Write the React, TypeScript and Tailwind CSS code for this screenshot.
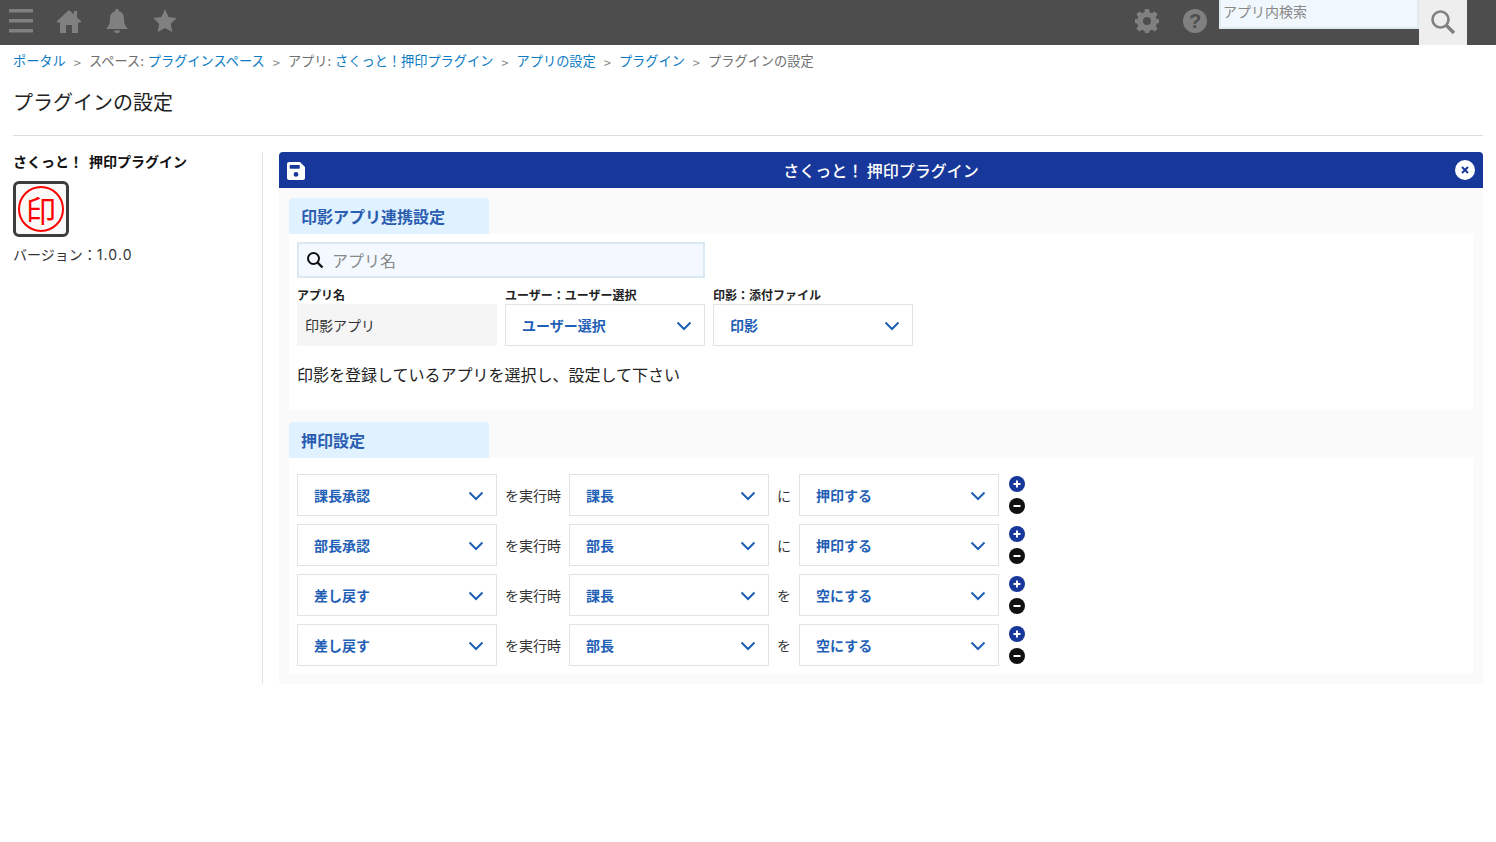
import React from "react";

const font = { fontFamily: '"Noto Sans CJK JP", "Noto Sans", sans-serif' };

function Chevron() {
  return (
    <svg width="16" height="10" viewBox="0 0 16 10" fill="none" className="shrink-0 mt-[2px]">
      <path d="M1.5 1.5 L8 8 L14.5 1.5" stroke="#1f5fb5" strokeWidth="2" />
    </svg>
  );
}

function Select({ label }: { label: string }) {
  return (
    <div className="w-[200px] h-[42px] shrink-0 border border-[#e3e3e3] bg-white flex items-center justify-between pl-4 pr-[12px]">
      <span className="text-[14px] font-bold text-[#1f5fb5]">{label}</span>
      <Chevron />
    </div>
  );
}

function PlusMinus() {
  return (
    <div className="ml-[10px] flex flex-col gap-[6px]">
      <div className="w-4 h-4 rounded-full bg-[#17379a] flex items-center justify-center">
        <svg width="8" height="8" viewBox="0 0 8 8"><path d="M4 0.5V7.5M0.5 4H7.5" stroke="#fff" strokeWidth="2" /></svg>
      </div>
      <div className="w-4 h-4 rounded-full bg-[#111] flex items-center justify-center">
        <svg width="8" height="8" viewBox="0 0 8 8"><path d="M0.5 4H7.5" stroke="#fff" strokeWidth="2" /></svg>
      </div>
    </div>
  );
}

function Row({ a, b, c, d }: { a: string; b: string; c: string; d: string }) {
  return (
    <div className="flex items-center">
      <Select label={a} />
      <span className="w-[72px] text-center text-[14px] text-[#333]">を実行時</span>
      <Select label={b} />
      <span className="w-[30px] text-center text-[14px] text-[#333]">{c}</span>
      <Select label={d} />
      <PlusMinus />
    </div>
  );
}

function Tab({ children }: { children: React.ReactNode }) {
  return (
    <div className="w-[200px] h-9 rounded-t-[4px] bg-[#e0f2ff] pl-3 flex items-center text-[16px] font-bold text-[#2a5db0]">
      {children}
    </div>
  );
}

function Sep() {
  return <span className="mx-[8px] text-[13px] text-[#888] relative top-[2px]">&gt;</span>;
}

function Link({ children }: { children: React.ReactNode }) {
  return <span className="text-[#0c7bc4]">{children}</span>;
}

export default function App() {
  return (
    <div className="min-h-[842px] bg-white text-[#222]" style={font}>
      <header className="h-[45px] bg-[#4d4d4d] flex items-start justify-between">
        <div className="flex items-center h-[42px] pl-[9px] gap-[24px]">
          <svg width="24" height="24" viewBox="0 0 24 24" fill="#808080">
            <rect x="0" y="0" width="24" height="3.5" />
            <rect x="0" y="10" width="24" height="3.5" />
            <rect x="0" y="20" width="24" height="3.5" />
          </svg>
          <svg width="24" height="24" viewBox="0 0 24 24" fill="#808080">
            <path d="M12 1 L17 5.5 V2 H20 V8.4 L24 12 V13.5 H21 V24 H15 V16 H9 V24 H3 V13.5 H0 V12 Z" />
          </svg>
          <svg width="24" height="24" viewBox="0 0 24 24" fill="#808080">
            <path d="M12 0 a2 2 0 0 1 2 2.2 C18 3.2 19 6.5 19 10 C19 15 20.5 17 23 20 H1 C3.5 17 5 15 5 10 C5 6.5 6 3.2 10 2.2 A2 2 0 0 1 12 0 Z" />
            <path d="M9 21.5 H15 A3 2.5 0 0 1 9 21.5 Z" />
          </svg>
          <svg width="24" height="24" viewBox="0 0 24 24" fill="#808080">
            <path d="M12 0.5 L15.6 8 L23.8 9.1 L17.8 14.8 L19.3 23 L12 19 L4.7 23 L6.2 14.8 L0.2 9.1 L8.4 8 Z" />
          </svg>
        </div>
        <div className="flex items-start">
          <svg width="24" height="24" viewBox="0 0 24 24" fill="#808080" className="mt-[9px] mr-[24px]">
            <path fillRule="evenodd" d="M10 0 H14 L14.7 3.3 L16.9 4.2 L19.8 2.4 L22.6 5.2 L20.8 8.1 L21.7 10.3 L24 10 V14 L21.7 14.7 L20.8 16.9 L22.6 19.8 L19.8 22.6 L16.9 20.8 L14.7 21.7 L14 24 H10 L9.3 21.7 L7.1 20.8 L4.2 22.6 L1.4 19.8 L3.2 16.9 L2.3 14.7 L0 14 V10 L2.3 10.3 L3.2 8.1 L1.4 5.2 L4.2 2.4 L7.1 4.2 L9.3 3.3 Z M12 8 A4 4 0 1 0 12 16 A4 4 0 1 0 12 8 Z" />
          </svg>
          <div className="w-6 h-6 mt-[9px] mr-[12px] rounded-full bg-[#808080] flex items-center justify-center text-[20px] leading-none font-bold text-[#4d4d4d]" style={{ fontFamily: '"Liberation Sans", sans-serif' }}>
            ?
          </div>
          <div className="w-[200px] h-[29px] bg-[#f0f8fe] border-b-2 border-x-2 border-[#dfe9f0] pl-[2px] text-[14px] leading-[23px] text-[#888]">
            アプリ内検索
          </div>
          <div className="w-[48px] h-[45px] bg-[#eeeeee] flex justify-center pt-[9px]">
            <svg width="26" height="26" viewBox="0 0 26 26" fill="none" stroke="#808080">
              <circle cx="10.5" cy="10.5" r="8" strokeWidth="2.6" />
              <path d="M16.5 16.5 L24 24" strokeWidth="3.4" />
            </svg>
          </div>
          <div className="w-[29px]" />
        </div>
      </header>

      <div className="px-[13px]">
        <nav className="h-[32px] pb-[1px] flex items-center text-[13.2px] text-[#707070] whitespace-nowrap">
          <Link>ポータル</Link>
          <Sep />
          <span className="mr-[4px]">スペース:</span><Link>プラグインスペース</Link>
          <Sep />
          <span className="mr-[4px]">アプリ:</span><Link>さくっと！押印プラグイン</Link>
          <Sep />
          <Link>アプリの設定</Link>
          <Sep />
          <Link>プラグイン</Link>
          <Sep />
          <span>プラグインの設定</span>
        </nav>
        <h1 className="h-[59px] pt-[11px] text-[20px] leading-[28px] font-normal text-[#222] border-b border-[#dddddd]">
          プラグインの設定
        </h1>

        <div className="flex mt-4">
          <aside className="w-[250px] shrink-0 border-r border-[#e3e3e3] min-h-[532px]">
            <div className="text-[14px] font-bold leading-[18px] text-[#111] whitespace-pre">さくっと！<span className="ml-[6px]">押印プラグイン</span></div>
            <div className="mt-[11px] w-[56px] h-[56px] rounded-[6px] border-[3px] border-[#3d3d3d] bg-[#fafafa] flex items-center justify-center">
              <div className="w-[46px] h-[46px] rounded-full border-2 border-[#ff0000] flex items-center justify-center text-[30px] leading-none text-[#ff0000]">
                印
              </div>
            </div>
            <div className="mt-[7px] text-[14px] leading-[20px] text-[#333]">
              バージョン：<span className="tracking-[1.1px]" style={{ fontFamily: 'Inter, sans-serif' }}>1.0.0</span>
            </div>
          </aside>

          <main className="ml-4 flex-1">
            <div className="relative h-9 rounded-t-[4px] bg-[#17379a] flex items-center justify-center text-[16px] text-white font-medium whitespace-pre">
              <svg width="18" height="18" viewBox="0 0 18 18" className="absolute left-[8px] top-[10px]">
                <path fillRule="evenodd" fill="#fff" d="M2 0 H13 L18 5 V16 A2 2 0 0 1 16 18 H2 A2 2 0 0 1 0 16 V2 A2 2 0 0 1 2 0 Z M3.5 3 A.8 .8 0 0 0 2.7 3.8 V6 A.8 .8 0 0 0 3.5 6.8 H12 A.8 .8 0 0 0 12.8 6 V3.8 A.8 .8 0 0 0 12 3 Z M9 10 A2.4 2.4 0 1 0 9 14.8 A2.4 2.4 0 1 0 9 10 Z" />
              </svg>
              さくっと！ 押印プラグイン
              <div className="absolute right-2 top-[8px] w-5 h-5 rounded-full bg-white flex items-center justify-center">
                <svg width="8" height="8" viewBox="0 0 8 8"><path d="M1 1 L7 7 M7 1 L1 7" stroke="#17379a" strokeWidth="2" /></svg>
              </div>
            </div>

            <div className="bg-[#fafafa] px-[10px] pt-[10px] pb-[10px]">
              <Tab>印影アプリ連携設定</Tab>
              <section className="bg-white h-[176px] px-2 pt-2">
                <div className="w-[408px] h-9 bg-[#f3f9ff] border-2 border-[#dbe9f3] flex items-center pl-[7px]">
                  <svg width="18" height="18" viewBox="0 0 18 18" fill="none" stroke="#111">
                    <circle cx="7.5" cy="7.5" r="5.5" strokeWidth="2" />
                    <path d="M11.5 11.5 L16.5 16.5" strokeWidth="2.4" />
                  </svg>
                  <span className="ml-[8px] text-[16px] text-[#888]">アプリ名</span>
                </div>
                <div className="flex gap-2 mt-[10px]">
                  <div className="w-[200px]">
                    <div className="h-4 text-[12px] leading-[14px] font-bold text-[#222]">アプリ名</div>
                    <div className="h-[42px] bg-[#f5f5f5] pl-2 flex items-center text-[14px] text-[#333]">印影アプリ</div>
                  </div>
                  <div className="w-[200px]">
                    <div className="h-4 text-[12px] leading-[14px] font-bold text-[#222] whitespace-nowrap">ユーザー：ユーザー選択</div>
                    <Select label="ユーザー選択" />
                  </div>
                  <div className="w-[200px]">
                    <div className="h-4 text-[12px] leading-[14px] font-bold text-[#222] whitespace-nowrap">印影：添付ファイル</div>
                    <Select label="印影" />
                  </div>
                </div>
                <p className="mt-[16px] text-[16px] leading-[24px] text-[#222]">
                  印影を登録しているアプリを選択し、設定して下さい
                </p>
              </section>

              <div className="mt-3">
                <Tab>押印設定</Tab>
              </div>
              <section className="bg-white h-[216px] px-2 pt-4 flex flex-col gap-2">
                <Row a="課長承認" b="課長" c="に" d="押印する" />
                <Row a="部長承認" b="部長" c="に" d="押印する" />
                <Row a="差し戻す" b="課長" c="を" d="空にする" />
                <Row a="差し戻す" b="部長" c="を" d="空にする" />
              </section>
            </div>
          </main>
        </div>
      </div>
    </div>
  );
}
